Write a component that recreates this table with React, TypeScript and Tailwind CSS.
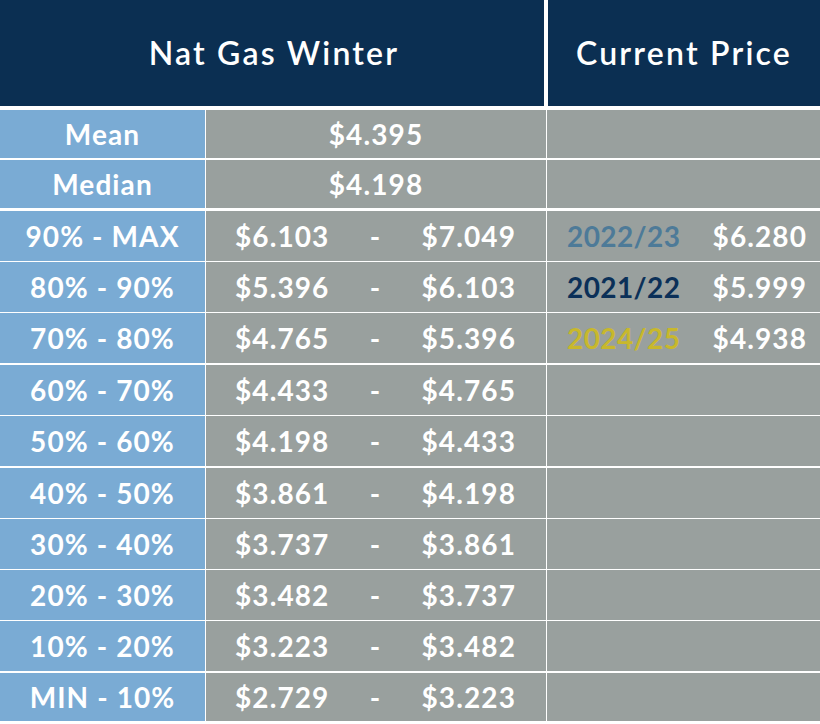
const ranges = [
  { label: "90% - MAX", lo: "$6.103", hi: "$7.049", gap: "mt-[3px]" },
  { label: "80% - 90%", lo: "$5.396", hi: "$6.103", gap: "mt-px" },
  { label: "70% - 80%", lo: "$4.765", hi: "$5.396", gap: "mt-px" },
  { label: "60% - 70%", lo: "$4.433", hi: "$4.765", gap: "mt-[2px]" },
  { label: "50% - 60%", lo: "$4.198", hi: "$4.433", gap: "mt-px" },
  { label: "40% - 50%", lo: "$3.861", hi: "$4.198", gap: "mt-[2px]" },
  { label: "30% - 40%", lo: "$3.737", hi: "$3.861", gap: "mt-px" },
  { label: "20% - 30%", lo: "$3.482", hi: "$3.737", gap: "mt-px" },
  { label: "10% - 20%", lo: "$3.223", hi: "$3.482", gap: "mt-px" },
  { label: "MIN - 10%", lo: "$2.729", hi: "$3.223", gap: "mt-[2px]" },
]

const current = [
  { year: "2022/23", price: "$6.280", color: "text-[#4d7a98]" },
  { year: "2021/22", price: "$5.999", color: "text-[#0b3058]" },
  { year: "2024/25", price: "$4.938", color: "text-[#c8b82c]" },
]

function Row({ label, children, right, className = "" }: { label: string; children: React.ReactNode; right?: React.ReactNode; className?: string }) {
  return (
    <div className={`flex h-[50px] ${className}`}>
      <div className="w-[205px] bg-[#7aabd4] flex items-center justify-center">{label}</div>
      <div className="w-[340px] ml-px bg-[#99a09e] flex items-center">{children}</div>
      <div className="flex-1 ml-px bg-[#99a09e] flex items-center justify-between pl-[20px] pr-[13px]">{right}</div>
    </div>
  )
}

export default function App() {
  return (
    <div
      className="w-[820px] h-[724px] bg-white text-white text-[28px] font-bold tracking-[1.1px] overflow-hidden"
      style={{ fontFamily: "Lato, 'Noto Sans', sans-serif" }}
    >
      <div className="flex h-[106px] bg-white text-[32px] font-semibold tracking-[2.2px]">
        <div className="w-[544px] bg-[#0b2f52] flex items-center justify-center pl-[4px]">Nat Gas Winter</div>
        <div className="flex-1 ml-[4px] bg-[#0b2f52] flex items-center justify-center">Current Price</div>
      </div>

      <Row label="Mean" className="mt-[4px] !h-[48px]">
        <span className="w-full text-center">$4.395</span>
      </Row>
      <Row label="Median" className="mt-[2px] !h-[48px]">
        <span className="w-full text-center">$4.198</span>
      </Row>

      {ranges.map((r, i) => (
        <Row
          key={r.label}
          label={r.label}
          className={`${r.gap} ${i === ranges.length - 1 ? "!h-[48px]" : ""}`}
          right={
            current[i] ? (
              <>
                <span className={`${current[i].color} tracking-[0.4px]`}>{current[i].year}</span>
                <span>{current[i].price}</span>
              </>
            ) : null
          }
        >
          <div className="w-full flex items-center justify-between pl-[29px] pr-[30px]">
            <span>{r.lo}</span>
            <span>-</span>
            <span>{r.hi}</span>
          </div>
        </Row>
      ))}
    </div>
  )
}
